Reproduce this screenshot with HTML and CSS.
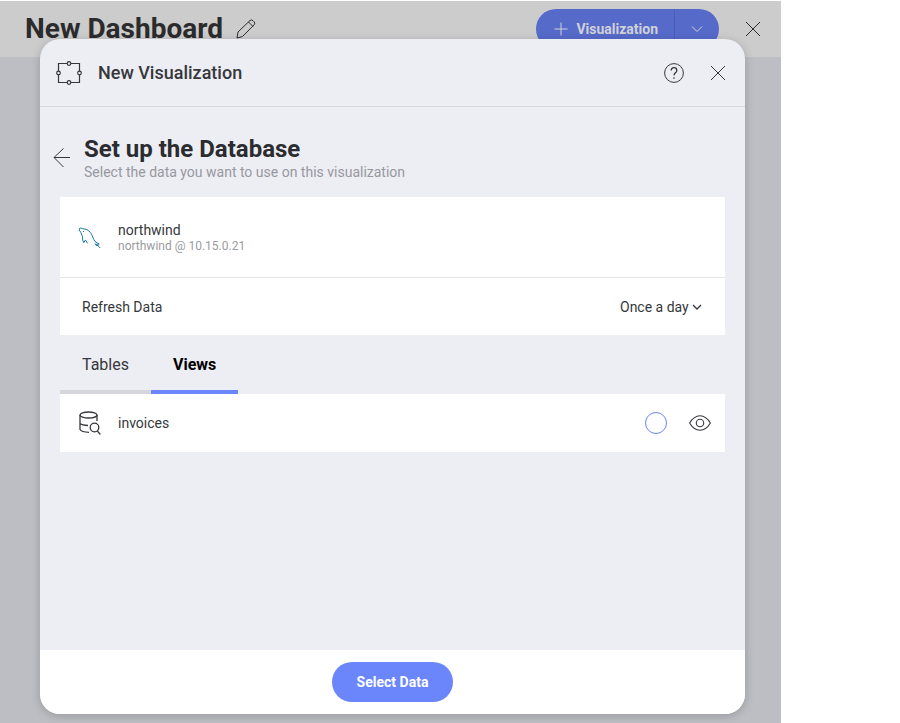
FILE: index.html
```html
<!DOCTYPE html>
<html lang="en">
<head>
<meta charset="utf-8">
<meta name="viewport" content="width=device-width, initial-scale=1">
<title>New Dashboard</title>
<link rel="stylesheet" href="styles.css">
</head>
<body>
<div class="app">
  <header class="topbar">
    <h1 class="topbar-title">New Dashboard</h1>
    <button class="icon-button edit" aria-label="Edit title">
      <svg width="20" height="20" viewBox="0 0 20 20"><path d="M1 19l1-6L14 1.500q1.500-1.200 3 .2l1 1q1.500 1.500.2 3L6.500 17.500zM12.500 3l4.500 4.500"/></svg>
    </button>
    <div class="split">
      <button class="split-main">
        <svg width="14" height="14" viewBox="0 0 14 14"><path d="M7 .5v13M.5 7h13"/></svg>
        Visualization
      </button>
      <button class="split-more" aria-label="More options">
        <svg width="12" height="8" viewBox="0 0 12 8"><path d="M1 1.500l5 5 5-5"/></svg>
      </button>
    </div>
    <button class="icon-button" aria-label="Close dashboard">
      <svg width="16" height="16" viewBox="0 0 16 16"><path d="M1 1l14 14M15 1L1 15"/></svg>
    </button>
  </header>

  <section class="dialog" role="dialog" aria-labelledby="dialog-title">
    <header class="dialog-header">
      <svg class="frame-icon" width="26" height="24" viewBox="0 0 26 24"><path d="M2.500 2.500h21v19h-21z"/><g class="knob"><circle cx="13" cy="2.500" r="1.800"/><circle cx="13" cy="21.500" r="1.800"/><circle cx="2.500" cy="12" r="1.800"/><circle cx="23.500" cy="12" r="1.800"/></g></svg>
      <h2 class="dialog-title" id="dialog-title">New Visualization</h2>
      <button class="icon-button" aria-label="Help">
        <svg width="20" height="20" viewBox="0 0 20 20"><circle cx="10" cy="10" r="9.400"/><path class="strong" d="M7.200 7.600q0-2.900 2.800-2.900t2.800 2.700q0 1.300-1.300 2.300T10 12.300M10 14.200v1.600"/></svg>
      </button>
      <button class="icon-button" aria-label="Close dialog">
        <svg width="16" height="16" viewBox="0 0 16 16"><path d="M1 1l14 14M15 1L1 15"/></svg>
      </button>
    </header>

    <main class="dialog-body">
      <div class="intro">
        <button class="icon-button back" aria-label="Back">
          <svg width="18" height="20" viewBox="0 0 18 20"><path d="M17 9.500H1M10.500.5L1 9.500l9.500 9.500"/></svg>
        </button>
        <div>
          <h3 class="intro-title">Set up the Database</h3>
          <p class="intro-text">Select the data you want to use on this visualization</p>
        </div>
      </div>

      <div class="card">
        <div class="row source">
          <svg class="mysql" width="22" height="22" viewBox="0 0 22 22"><path d="M8.500 16.300L6.400 13l-1.600 2.700Q3 13 3.600 9.800L1.800 5.500Q-.6 2.500.5 1.300 1.500.7 3.500 1.600 8.500 1.500 11.500 5.500c2 3 2.500 6.300 4.500 9 1.200 1.300 3 1.500 4.200 2.600l-2.700.2 3.700 3.700M16 16.500l1 1.800 2.400.4M4.200 3.900l.7 1.200"/></svg>
          <div class="grow">
            <div class="name">northwind</div>
            <div class="host">northwind @ 10.15.0.21</div>
          </div>
        </div>
        <div class="row refresh">
          <label class="grow" for="refresh">Refresh Data</label>
          <span class="picker">
            <select id="refresh"><option>Once a day</option></select>
            <svg width="10" height="6" viewBox="0 0 10 6"><path class="strong" d="M1 1l4 4 4-4"/></svg>
          </span>
        </div>
      </div>

      <div class="tabs" role="tablist">
        <button class="tab" role="tab" aria-selected="false">Tables</button>
        <button class="tab" role="tab" aria-selected="true">Views</button>
      </div>

      <div class="card row item">
        <svg class="database" width="22" height="24" viewBox="0 0 22 24"><ellipse cx="9.500" cy="4" rx="8.500" ry="3"/><path d="M1 4v14.500Q2.500 21 10 21.400M18 4v6M1 12.500q2 1.700 8 2"/><circle cx="15.500" cy="16.500" r="4.300"/><path d="M18.300 19.800l3 3.700"/></svg>
        <label class="grow" for="invoices">invoices</label>
        <input class="choice" type="radio" name="view" id="invoices">
        <button class="icon-button preview" aria-label="Preview invoices">
          <svg width="22" height="16" viewBox="0 0 22 16"><path class="eye" d="M.6 8Q5 .7 11 .7T21.400 8Q17 15.300 11 15.300T.6 8z"/><circle class="eye" cx="11" cy="8" r="3.700"/></svg>
        </button>
      </div>
    </main>

    <footer class="dialog-footer">
      <button class="primary">Select Data</button>
    </footer>
  </section>
</div>
</body>
</html>
```
FILE: styles.css
```css
* {
  box-sizing: border-box;
}

body {
  margin: 0;
  padding: 1px 119px 0 0;
  background: #fff;
  color: #36373b;
  font: 14px/18px Roboto, "Liberation Sans", sans-serif;
}

h1, h2, h3, p {
  margin: 0;
}

button, select {
  padding: 0;
  border: 0;
  background: none;
  color: inherit;
  font: inherit;
}

svg {
  display: block;
  flex: none;
  fill: none;
  stroke: currentColor;
  stroke-width: 1;
}

.strong {
  stroke-width: 1.3;
}

.eye {
  stroke-width: 1.1;
}

.app {
  position: relative;
  min-height: calc(100vh - 1px);
  background: #bdbec4;
}

.topbar {
  display: flex;
  align-items: center;
  height: 56px;
  padding: 0 20px 0 25px;
  background: #ccc;
  color: #2b2b2d;
}

.topbar-title {
  font-size: 28px;
  line-height: 32px;
  font-weight: 700;
}

.icon-button {
  display: grid;
  place-items: center;
  flex: none;
  width: 16px;
  height: 24px;
}

.edit {
  width: 20px;
  margin: 0 auto 0 13px;
}

.split {
  display: flex;
  height: 40px;
  margin-right: 26px;
  border-radius: 20px;
  background: #566aca;
  color: #d0d1d8;
}

.split-main {
  display: flex;
  align-items: center;
  gap: 8px;
  padding: 0 16px 0 18px;
  font-weight: 700;
}

.split-more {
  display: grid;
  place-items: center;
  width: 45px;
  border-left: 1px solid #4a5cb5;
}

/* The dialog lies over the dashboard */
.dialog {
  position: absolute;
  inset: 38px 36px 9px 40px;
  display: flex;
  flex-direction: column;
  border-radius: 20px;
  overflow: hidden;
  background: #edeef4;
  box-shadow: 0 2px 10px rgba(0, 0, 0, 0.2);
}

.dialog-header {
  display: flex;
  align-items: center;
  gap: 16px;
  height: 68px;
  padding: 0 19px 0 16px;
  border-bottom: 1px solid #d8d9df;
}

.dialog-header .icon-button {
  width: 28px;
}

.dialog-header .icon-button:last-child {
  width: 16px;
  margin-left: 6px;
}

.knob {
  fill: #edeef4;
}

.frame-icon {
  stroke-width: 1.2;
}

.dialog-title {
  flex: 1;
  font-size: 18px;
  line-height: 24px;
  font-weight: 500;
}

.dialog-body {
  flex: 1;
  padding: 28px 20px 0;
}

.intro {
  display: flex;
  align-items: center;
  margin-bottom: 16px;
}

.back {
  width: 18px;
  margin: 0 13px 0 -7px;
}

.intro-title {
  font-size: 24px;
  line-height: 28px;
  font-weight: 700;
  color: #2b2c30;
}

.intro-text {
  color: #97989d;
}

.card {
  background: #fff;
}

.row {
  display: flex;
  align-items: center;
  padding: 0 14px 0 19px;
}

.grow {
  flex: 1;
}

.source {
  gap: 17px;
  height: 81px;
  padding-top: 1px;
  border-bottom: 1px solid #e5e6ea;
}

.mysql {
  color: #1b7b9e;
}

.name {
  line-height: 16px;
}

.host {
  font-size: 12px;
  line-height: 16px;
  color: #9b9c9f;
}

.refresh {
  height: 57px;
  padding: 0 23px 0 22px;
}

.picker {
  display: flex;
  align-items: center;
  gap: 3px;
}

.picker select {
  appearance: none;
}

.tabs {
  display: flex;
}

.tab {
  height: 59px;
  padding: 4px 22px 0;
  border-bottom: 4px solid #d6d7dc;
  font-size: 16px;
}

.tab[aria-selected="true"] {
  border-color: #6b86fb;
  color: #000;
  font-weight: 700;
}

.item {
  gap: 17px;
  height: 58px;
}

.database {
  stroke-width: 1.3;
}

.choice {
  appearance: none;
  width: 22px;
  height: 22px;
  margin: 0 5px 0 0;
  border: 1px solid #6b86fb;
  border-radius: 50%;
}

.choice:checked {
  background: #6b86fb;
}

.preview {
  width: 22px;
}

.dialog-footer {
  display: grid;
  place-items: center;
  padding: 12px;
  background: #fff;
}

.primary {
  height: 40px;
  padding: 0 25px;
  border-radius: 20px;
  background: #6b86fb;
  color: #fff;
  font-weight: 700;
}
```
